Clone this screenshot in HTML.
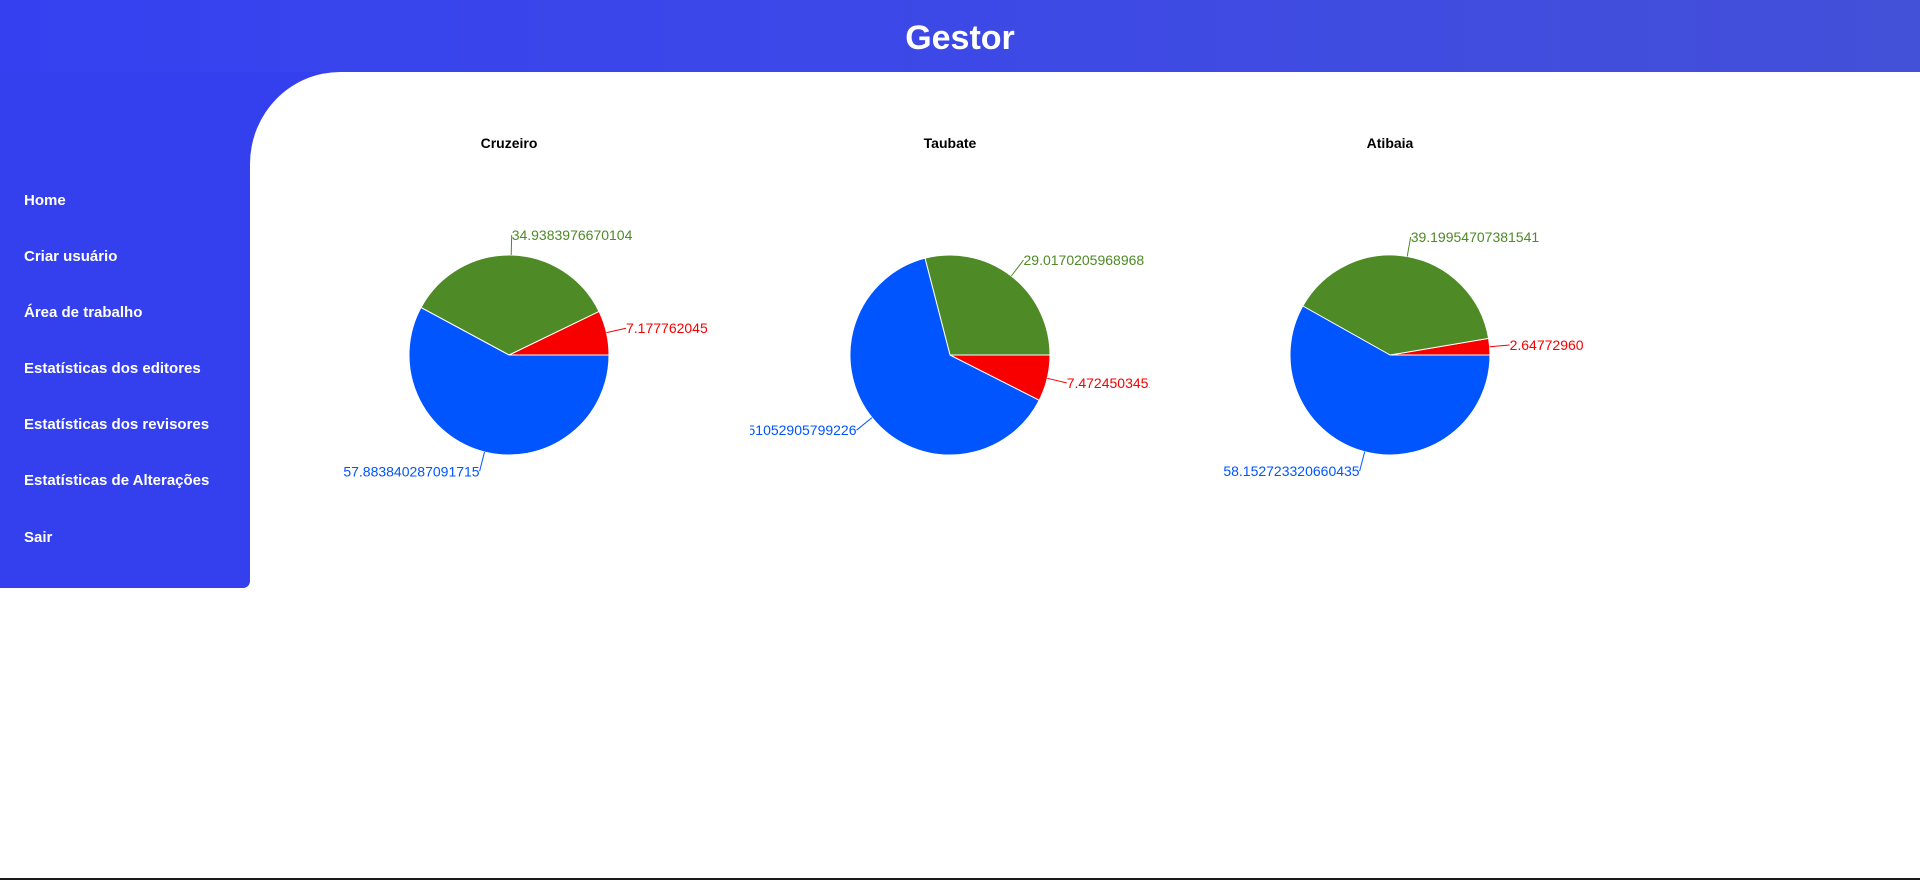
<!DOCTYPE html>
<html><head><meta charset="utf-8">
<style>
*{margin:0;padding:0;box-sizing:border-box}
html,body{width:1920px;height:880px;overflow:hidden;background:#fff;font-family:"Liberation Sans",sans-serif}
.hdr{position:absolute;left:0;top:0;width:1920px;height:72px;background:linear-gradient(90deg,#3541f0,#3d49e6 50%,#4350d8);color:#fff;text-align:center;font-weight:bold;font-size:34px;line-height:76px}
.side{position:absolute;left:0;top:72px;width:250px;height:516px;background:#3440ee;border-bottom-right-radius:7px}
.corner{position:absolute;left:240px;top:72px;width:120px;height:120px;background:#3440ee}
.white{position:absolute;left:250px;top:72px;width:1670px;height:808px;background:#fff;border-top-left-radius:90px 92px}
.nav{position:absolute;left:24px;color:#fff;font-weight:bold;font-size:15px;line-height:18px}
.t{position:absolute;top:135px;width:400px;text-align:center;font-weight:bold;font-size:14px;color:#000}
svg{position:absolute;top:155px;overflow:hidden}
svg text{font-family:"Liberation Sans",sans-serif;font-size:14px;dominant-baseline:central}
.bot{position:absolute;left:0;top:878px;width:1920px;height:2px;background:#1a1a1a}
</style></head><body>
<div class="hdr">Gestor</div>
<div class="side"></div>
<div class="corner"></div>
<div class="white"></div>
<div class="nav" style="top:192px">Home</div>
<div class="nav" style="top:248px">Criar usuário</div>
<div class="nav" style="top:304px">Área de trabalho</div>
<div class="nav" style="top:360px">Estatísticas dos editores</div>
<div class="nav" style="top:416px">Estatísticas dos revisores</div>
<div class="nav" style="top:472px">Estatísticas de Alterações</div>
<div class="nav" style="top:529px">Sair</div>

<div class="t" style="left:309px">Cruzeiro</div>
<div class="t" style="left:750px">Taubate</div>
<div class="t" style="left:1190px">Atibaia</div>

<svg style="left:309px" width="400" height="400">
<path d="M200,200 L300,200 A100,100 0 0 0 290,156.4 Z" fill="#f80000" stroke="#fff"/>
<path d="M200,200 L290,156.4 A100,100 0 0 0 112,152.5 Z" fill="#4e8a25" stroke="#fff"/>
<path d="M200,200 L112,152.5 A100,100 0 1 0 300,200 Z" fill="#0055ff" stroke="#fff"/>
<path d="M297.5,177.6 L317,173.2" stroke="#f80000" fill="none"/>
<path d="M202.2,100 L202.7,80" stroke="#4e8a25" fill="none"/>
<path d="M175.5,297 L170.6,316.3" stroke="#0055ff" fill="none"/>
<text x="317" y="173.2" fill="#f80000">7.177762045198</text>
<text x="202.7" y="80" fill="#4e8a25">34.9383976670104</text>
<text x="170.6" y="316.3" fill="#0055ff" text-anchor="end">57.883840287091715</text>
</svg>

<svg style="left:750px" width="400" height="400">
<path d="M200,200 L300,200 A100,100 0 0 0 175,103.2 Z" fill="#4e8a25" stroke="#fff"/>
<path d="M200,200 L175,103.2 A100,100 0 1 0 289.2,245.2 Z" fill="#0055ff" stroke="#fff"/>
<path d="M200,200 L289.2,245.2 A100,100 0 0 0 300,200 Z" fill="#f80000" stroke="#fff"/>
<path d="M261.3,121 L273.5,105.1" stroke="#4e8a25" fill="none"/>
<path d="M122,262.6 L106.5,275.2" stroke="#0055ff" fill="none"/>
<path d="M297.3,223.3 L316.7,227.9" stroke="#f80000" fill="none"/>
<text x="273.5" y="105.1" fill="#4e8a25">29.0170205968968</text>
<text x="106.5" y="275.2" fill="#0055ff" text-anchor="end">63.51052905799226</text>
<text x="316.7" y="227.9" fill="#f80000">7.472450345125</text>
</svg>

<svg style="left:1190px" width="400" height="400">
<path d="M200,200 L300,200 A100,100 0 0 0 298.6,183.4 Z" fill="#f80000" stroke="#fff"/>
<path d="M200,200 L298.6,183.4 A100,100 0 0 0 112.8,151 Z" fill="#4e8a25" stroke="#fff"/>
<path d="M200,200 L112.8,151 A100,100 0 1 0 300,200 Z" fill="#0055ff" stroke="#fff"/>
<path d="M299.7,191.7 L319.6,190" stroke="#f80000" fill="none"/>
<path d="M217.2,101.5 L220.7,81.8" stroke="#4e8a25" fill="none"/>
<path d="M174.7,296.7 L169.6,316.1" stroke="#0055ff" fill="none"/>
<text x="319.6" y="190" fill="#f80000">2.64772960</text>
<text x="220.7" y="81.8" fill="#4e8a25">39.19954707381541</text>
<text x="169.6" y="316.1" fill="#0055ff" text-anchor="end">58.152723320660435</text>
</svg>
<div class="bot"></div>
</body></html>
